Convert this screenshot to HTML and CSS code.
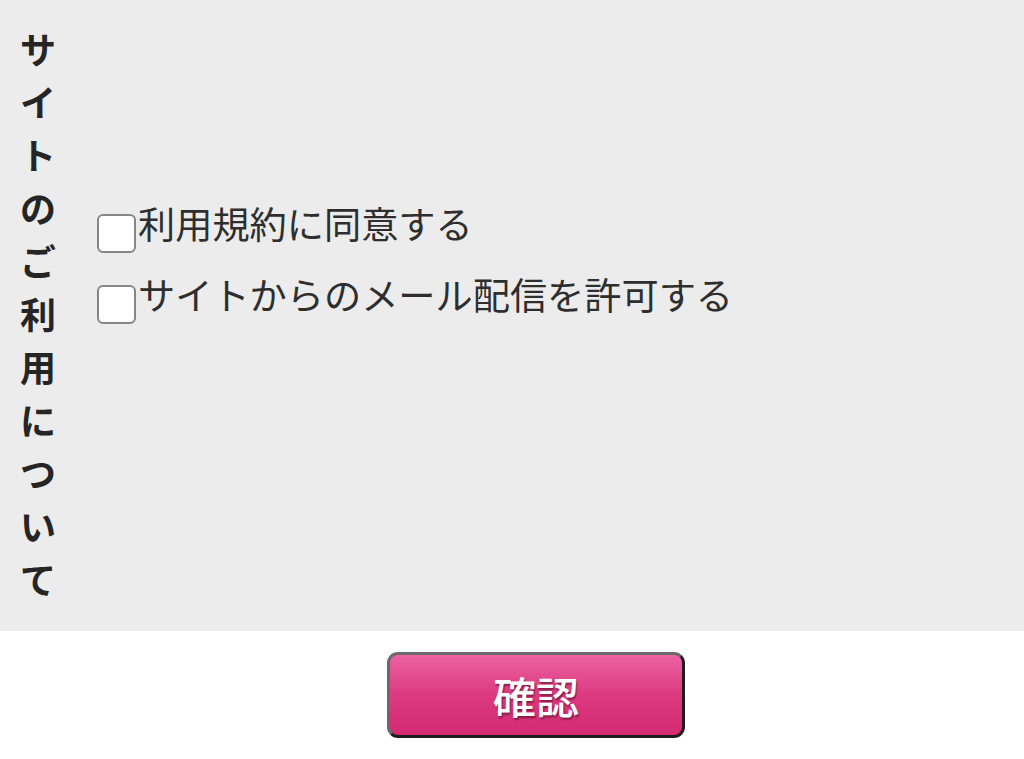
FILE: index.html
```html
<!DOCTYPE html>
<html lang="ja">
<head>
    <meta charset="UTF-8">
    <meta name="viewport" content="width=device-width, initial-scale=1.0">
    <title>サイトのご利用について</title>
    <link rel="stylesheet" href="styles.css">
</head>
<body>
    <form class="agree-form">
        <div class="agree-table">
            <div class="agree-label">サイトのご利用について</div>
            <div class="agree-options">
                <label class="agree-row">
                    <input type="checkbox" class="agree-check" name="terms">
                    <span>利用規約に同意する</span>
                </label>
                <label class="agree-row">
                    <input type="checkbox" class="agree-check" name="mail">
                    <span>サイトからのメール配信を許可する</span>
                </label>
            </div>
        </div>

        <div class="actions">
            <button type="submit" class="confirm-btn">確認</button>
        </div>
    </form>
</body>
</html>
```

FILE: styles.css
```css
* {
    margin: 0;
    padding: 0;
    box-sizing: border-box;
}

body {
    background-color: #ffffff;
    color: #2b2b2b;
    font-family: "Noto Sans CJK JP", "Noto Sans", sans-serif;
}

.agree-table {
    display: flex;
    background-color: #ececec;
    height: 631px;
}

.agree-label {
    width: 56px;
    padding: 22px 0 0 20px;
    font-size: 36px;
    line-height: 53px;
    font-weight: bold;
    color: #252525;
    word-break: break-all;
}

.agree-options {
    display: flex;
    flex-direction: column;
    gap: 19px;
    padding: 201px 0 0 41px;
}

.agree-row {
    display: flex;
    align-items: flex-start;
    font-size: 37.2px;
    line-height: 44px;
    color: #2e2e2e;
    cursor: pointer;
}

.agree-check {
    appearance: none;
    -webkit-appearance: none;
    width: 39px;
    height: 39px;
    margin-top: 13px;
    margin-right: 2px;
    background-color: #ffffff;
    border: 2px solid #868686;
    border-radius: 6px;
    flex-shrink: 0;
}

.actions {
    display: flex;
    padding: 21px 0 0 387px;
}

.confirm-btn {
    width: 298px;
    height: 86px;
    border: 3px solid;
    border-color: #6a6a6a #1e1e1e #1e1e1e #6a6a6a;
    border-radius: 11px;
    background: linear-gradient(to bottom, #ec62a2, #dc3a80 50%, #d42a72);
    color: #ffffff;
    font-family: "Noto Sans CJK JP", sans-serif;
    font-size: 43px;
    font-weight: 500;
    text-shadow: 1px 2px 2px rgba(60, 0, 20, 0.55);
    cursor: pointer;
}
```
